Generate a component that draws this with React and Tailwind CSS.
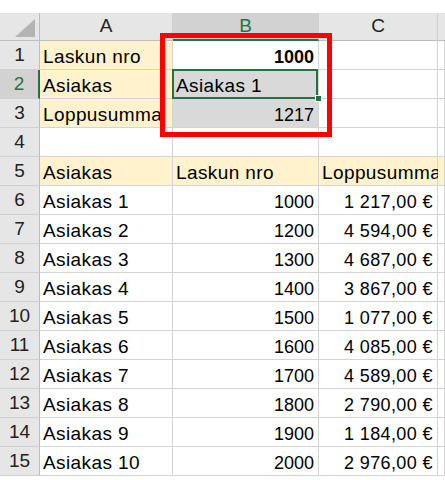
import React from "react";

const data = [
  ["Asiakas 1", "1000", "1 217,00 €"],
  ["Asiakas 2", "1200", "4 594,00 €"],
  ["Asiakas 3", "1300", "4 687,00 €"],
  ["Asiakas 4", "1400", "3 867,00 €"],
  ["Asiakas 5", "1500", "1 077,00 €"],
  ["Asiakas 6", "1600", "4 085,00 €"],
  ["Asiakas 7", "1700", "4 589,00 €"],
  ["Asiakas 8", "1800", "2 790,00 €"],
  ["Asiakas 9", "1900", "1 184,00 €"],
  ["Asiakas 10", "2000", "2 976,00 €"],
];

const cellBase =
  "h-[29px] border-r border-b border-[#d4d4d4] flex items-end pb-[2px] px-[3px] leading-[20px] whitespace-nowrap";
const txt = " text-[19px] tracking-[0.4px]";
const num = " text-[18px] justify-end pr-[4px]";
const cur = " text-[18px] justify-end pr-[4px] tracking-[0.4px]";

function RowHead({ n, active }) {
  return (
    <div
      className={
        "h-[29px] flex items-center justify-center border-b border-[#d0d0d0] leading-[20px] text-[19px] " +
        (active
          ? "bg-[#d2d2d2] text-[#217346] border-r-2 border-r-[#217346]"
          : "bg-[#e6e6e6] text-[#222] border-r border-r-[#bdbdbd]")
      }
    >
      {n}
    </div>
  );
}

export default function App() {
  return (
    <div
      className="relative w-[445px] h-[480px] overflow-hidden bg-white pt-[13px] text-[18px] text-black"
      style={{ fontFamily: '"Liberation Sans", Arial, sans-serif' }}
    >
      <div className="grid grid-cols-[40px_133px_146px_119px_1fr]">
        {/* header row */}
        <div className="h-[28px] bg-[#e6e6e6] border-r border-b border-[#bdbdbd] flex items-end justify-end pr-[4px] pb-[3px]">
          <svg width="20" height="18" viewBox="0 0 20 18">
            <polygon points="20,0 20,18 0,18" fill="#b4b4b4" />
          </svg>
        </div>
        <div className="h-[28px] bg-[#e6e6e6] border-r border-r-[#cfcfcf] border-b border-b-[#bdbdbd] flex items-center justify-center text-[#222] text-[19px]">
          A
        </div>
        <div className="h-[28px] bg-[#d2d2d2] border-r border-r-[#cfcfcf] border-b-2 border-b-[#217346] flex items-center justify-center text-[#217346] text-[19px]">
          B
        </div>
        <div className="h-[28px] bg-[#e6e6e6] border-r border-r-[#cfcfcf] border-b border-b-[#bdbdbd] flex items-center justify-center text-[#222] text-[19px]">
          C
        </div>
        <div className="h-[28px] bg-[#e6e6e6] border-b border-b-[#bdbdbd]"></div>

        {/* row 1 */}
        <RowHead n={1} />
        <div className={cellBase + txt + " bg-[#fff2cc] overflow-hidden"}>Laskun nro</div>
        <div className={cellBase + num + " font-bold"}>1000</div>
        <div className={cellBase}></div>
        <div className={cellBase}></div>

        {/* row 2 */}
        <RowHead n={2} active />
        <div className={cellBase + txt + " bg-[#fff2cc] overflow-hidden"}>Asiakas</div>
        <div className={cellBase + txt + " bg-[#d9d9d9] relative"}>
          Asiakas 1
          <div className="absolute -top-[1px] -left-[1px] right-0 -bottom-[1px] border-2 border-[#217346]"></div>
          <div className="absolute -right-[4px] -bottom-[4px] w-[7px] h-[7px] bg-[#217346] border border-white"></div>
        </div>
        <div className={cellBase}></div>
        <div className={cellBase}></div>

        {/* row 3 */}
        <RowHead n={3} />
        <div className={cellBase + txt + " bg-[#fff2cc] overflow-hidden"}>Loppusumma</div>
        <div className={cellBase + num + " bg-[#d9d9d9]"}>1217</div>
        <div className={cellBase}></div>
        <div className={cellBase}></div>

        {/* row 4 */}
        <RowHead n={4} />
        <div className={cellBase}></div>
        <div className={cellBase}></div>
        <div className={cellBase}></div>
        <div className={cellBase}></div>

        {/* row 5 */}
        <RowHead n={5} />
        <div className={cellBase + txt + " bg-[#fff2cc]"}>Asiakas</div>
        <div className={cellBase + txt + " bg-[#fff2cc]"}>Laskun nro</div>
        <div className={cellBase + txt + " bg-[#fff2cc] overflow-visible"}>Loppusumma</div>
        <div className={cellBase + " bg-[#fff2cc]"}></div>

        {data.map((r, i) => (
          <React.Fragment key={i}>
            <RowHead n={i + 6} />
            <div className={cellBase + txt}>{r[0]}</div>
            <div className={cellBase + num}>{r[1]}</div>
            <div className={cellBase + cur}>{r[2]}</div>
            <div className={cellBase}></div>
          </React.Fragment>
        ))}
      </div>

      {/* red highlight box */}
      <div className="absolute left-[160px] top-[33px] w-[172px] h-[104px] border-[5px] border-[#ff0000] pointer-events-none"></div>
    </div>
  );
}
